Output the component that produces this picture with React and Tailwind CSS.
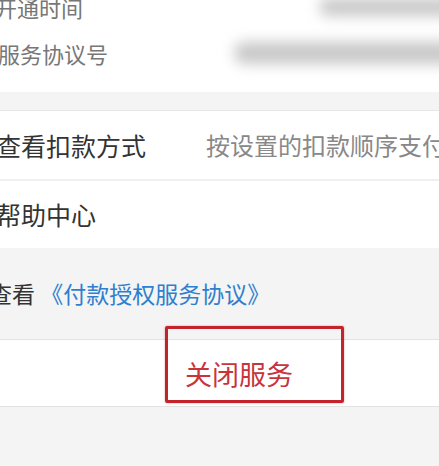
export default function App() {
  const font = { fontFamily: '"Noto Sans CJK SC", "Noto Sans", sans-serif' };

  return (
    <div className="relative w-[439px] h-[466px] overflow-hidden bg-[#f4f4f4]" style={font}>
      {/* info block */}
      <div className="bg-white h-[92px] flex flex-col">
        <div className="h-[14px] flex items-center justify-between">
          <span className="text-[22px] text-[#777] leading-none -ml-[5px]">开通时间</span>
          <div className="w-[150px] h-[18px] bg-[#c8c8c8] rounded-full blur-[7px] mr-[-30px]" />
        </div>
        <div className="h-[78px] flex items-center justify-between">
          <span className="text-[22px] text-[#777] leading-none -ml-[2px]">服务协议号</span>
          <div className="w-[235px] h-[22px] bg-[#c8c8c8] rounded-full blur-[7px] mr-[-30px]" />
        </div>
      </div>

      <div className="h-[19px] border-b border-[#e6e6e6]" />

      {/* menu rows */}
      <div className="bg-white">
        <div className="h-[70px] flex items-center border-b-2 border-[#efefef]">
          <span className="text-[25px] text-[#333] leading-none -ml-[4px] whitespace-nowrap">查看扣款方式</span>
          <span className="ml-[60px] text-[24px] text-[#888] leading-none whitespace-nowrap">按设置的扣款顺序支付</span>
        </div>
        <div className="h-[67px] flex items-center">
          <span className="text-[25px] text-[#333] leading-none -ml-[4px]">帮助中心</span>
        </div>
      </div>

      {/* agreement */}
      <div className="h-[92px] flex items-center border-b border-[#e2e2e2]">
        <span className="text-[23px] text-[#333] leading-none -ml-[11px] whitespace-nowrap">
          查看 <span className="text-[#2f7fcf]">《付款授权服务协议》</span>
        </span>
      </div>

      {/* close service */}
      <div className="bg-white h-[67px] flex items-center border-b border-[#e2e2e2]">
        <span className="ml-[185px] text-[27px] text-[#c8343c] leading-none">关闭服务</span>
      </div>

      {/* annotation box */}
      <div className="absolute left-[165px] top-[326px] w-[179px] h-[77px] border-[3px] border-[#c4232b] rounded-[2px] shadow-[0_0_2px_rgba(150,0,0,0.4)]" />
    </div>
  );
}
